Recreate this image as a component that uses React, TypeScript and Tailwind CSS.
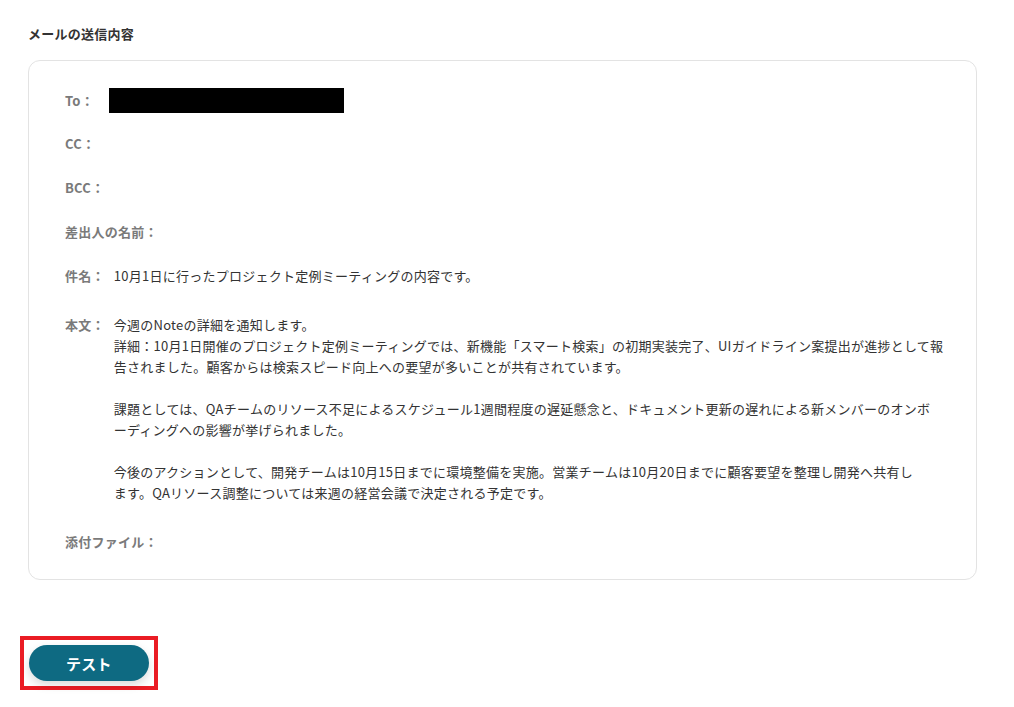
import React from 'react';

const bodyParagraphs: string[][] = [
  [
    '今週のNoteの詳細を通知します。',
    '詳細：10月1日開催のプロジェクト定例ミーティングでは、新機能「スマート検索」の初期実装完了、UIガイドライン案提出が進捗として報',
    '告されました。顧客からは検索スピード向上への要望が多いことが共有されています。',
  ],
  [
    '課題としては、QAチームのリソース不足によるスケジュール1週間程度の遅延懸念と、ドキュメント更新の遅れによる新メンバーのオンボ',
    'ーディングへの影響が挙げられました。',
  ],
  [
    '今後のアクションとして、開発チームは10月15日までに環境整備を実施。営業チームは10月20日までに顧客要望を整理し開発へ共有し',
    'ます。QAリソース調整については来週の経営会議で決定される予定です。',
  ],
];

function Label({ children }: { children: React.ReactNode }) {
  return <span className="shrink-0 font-bold text-[#7a7a7a]">{children}</span>;
}

export default function App() {
  return (
    <div
      className="min-h-[707px] w-[1014px] bg-white text-[13px] leading-[21px] tracking-[0.25px] text-[#333333]"
      style={{ fontFamily: '"Noto Sans CJK JP", "Noto Sans", sans-serif' }}
    >
      <div className="px-[28px] pt-[23px]">
        <h2 className="font-bold text-[13px] leading-[21px] text-[#333333]">メールの送信内容</h2>

        {/* Mail card */}
        <div className="mt-[16px] w-[949px] rounded-[12px] border border-[#e3e3e3] pl-[36px] pr-[30px] pt-[27px] pb-[27px]">
          <div className="flex flex-col gap-[23px]">
            <div className="flex items-center">
              <Label>To：</Label>
              <div className="ml-[15px] h-[25px] w-[235px] bg-black" />
            </div>
            <div className="-mt-[3px] flex">
              <Label>CC：</Label>
            </div>
            <div className="flex">
              <Label>BCC：</Label>
            </div>
            <div className="flex">
              <Label>差出人の名前：</Label>
            </div>
            <div className="flex">
              <Label>件名：</Label>
              <span className="ml-[9px]">10月1日に行ったプロジェクト定例ミーティングの内容です。</span>
            </div>
            <div className="mt-[5px] flex">
              <Label>本文：</Label>
              <div className="ml-[9px] flex flex-col gap-[21px] leading-[21px]">
                {bodyParagraphs.map((para, i) => (
                  <div key={i}>
                    {para.map((line, j) => (
                      <div key={j} className="whitespace-nowrap">
                        {line}
                      </div>
                    ))}
                  </div>
                ))}
              </div>
            </div>
            <div className="mt-[5px] flex">
              <Label>添付ファイル：</Label>
            </div>
          </div>
        </div>

        {/* Test button with red highlight */}
        <div className="mt-[56px] -ml-[8px] inline-flex border-[4px] border-[#ea1c24] p-[5px]">
          <button className="h-[36px] w-[120px] rounded-full bg-[#0e6a82] text-[15px] font-bold text-white shadow-[0_4px_10px_rgba(0,0,0,0.15)]">
            テスト
          </button>
        </div>
      </div>
    </div>
  );
}
